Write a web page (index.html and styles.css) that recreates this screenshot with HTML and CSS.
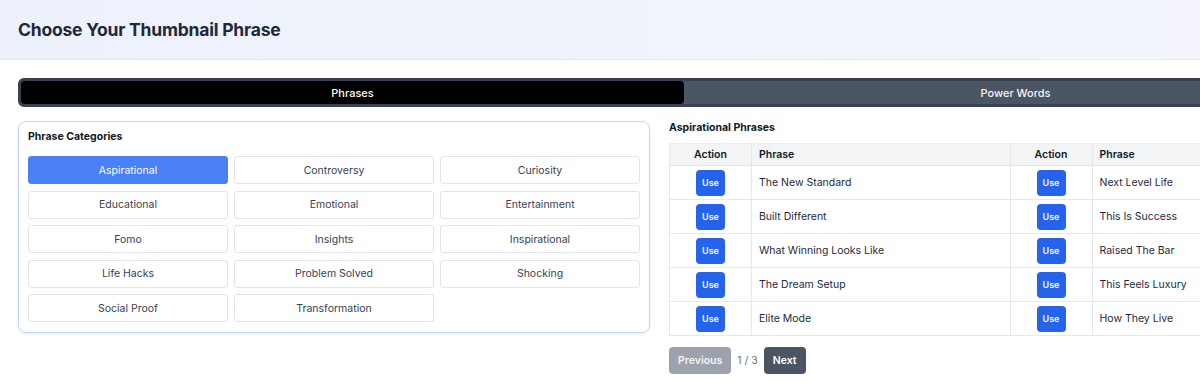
FILE: index.html
```html
<!DOCTYPE html>
<html lang="en">
<head>
  <meta charset="UTF-8" />
  <meta name="viewport" content="width=device-width, initial-scale=1.0" />
  <title>Choose Your Thumbnail Phrase</title>
  <link rel="stylesheet" href="styles.css">
</head>
<body>
  <div class="header">
    <h1>Choose Your Thumbnail Phrase</h1>
  </div>

  <div class="main">
    <div class="tabs">
      <button class="tab active">Phrases</button>
      <button class="tab">Power Words</button>
    </div>

    <div class="content">
      <div class="categories">
        <h2>Phrase Categories</h2>
        <div class="cat-grid">
          <button class="cat active">Aspirational</button>
          <button class="cat">Controversy</button>
          <button class="cat">Curiosity</button>
          <button class="cat">Educational</button>
          <button class="cat">Emotional</button>
          <button class="cat">Entertainment</button>
          <button class="cat">Fomo</button>
          <button class="cat">Insights</button>
          <button class="cat">Inspirational</button>
          <button class="cat">Life Hacks</button>
          <button class="cat">Problem Solved</button>
          <button class="cat">Shocking</button>
          <button class="cat">Social Proof</button>
          <button class="cat">Transformation</button>
        </div>
      </div>

      <div class="phrases">
        <h2>Aspirational Phrases</h2>
        <table>
          <thead>
            <tr>
              <th class="action">Action</th>
              <th>Phrase</th>
              <th class="action">Action</th>
              <th>Phrase</th>
            </tr>
          </thead>
          <tbody>
            <tr>
              <td class="action"><button class="use">Use</button></td>
              <td>The New Standard</td>
              <td class="action"><button class="use">Use</button></td>
              <td>Next Level Life</td>
            </tr>
            <tr>
              <td class="action"><button class="use">Use</button></td>
              <td>Built Different</td>
              <td class="action"><button class="use">Use</button></td>
              <td>This Is Success</td>
            </tr>
            <tr>
              <td class="action"><button class="use">Use</button></td>
              <td>What Winning Looks Like</td>
              <td class="action"><button class="use">Use</button></td>
              <td>Raised The Bar</td>
            </tr>
            <tr>
              <td class="action"><button class="use">Use</button></td>
              <td>The Dream Setup</td>
              <td class="action"><button class="use">Use</button></td>
              <td>This Feels Luxury</td>
            </tr>
            <tr>
              <td class="action"><button class="use">Use</button></td>
              <td>Elite Mode</td>
              <td class="action"><button class="use">Use</button></td>
              <td>How They Live</td>
            </tr>
          </tbody>
        </table>

        <div class="pager">
          <button class="page-btn disabled">Previous</button>
          <span class="page-info">1 / 3</span>
          <button class="page-btn">Next</button>
        </div>
      </div>
    </div>
  </div>
</body>
</html>
```

FILE: styles.css
```css
html, body {
  overflow: hidden;
}

body {
  font-family: Inter, "Noto Sans", Arial, sans-serif;
  background: #ffffff;
  color: #1f2937;
  margin: 0;
  width: 1368px;
}

button {
  font-family: inherit;
  cursor: pointer;
}

.header {
  height: 59px;
  display: flex;
  align-items: center;
  padding: 0 18px;
  background: linear-gradient(90deg, #edf1fb, #f4f6fc);
  border-bottom: 1px solid #e3e7ef;
}

.header h1 {
  margin: 0;
  font-size: 17.5px;
  font-weight: 700;
  color: #1f2937;
  letter-spacing: -0.2px;
}

.main {
  padding: 18px 18px 0 18px;
}

.tabs {
  display: flex;
  height: 23px;
  border: 3px solid #374151;
  border-radius: 6px;
  background: #4b5563;
}

.tab {
  flex: 1;
  border: 0;
  background: transparent;
  color: #f3f4f6;
  font-size: 11px;
  font-weight: 500;
  border-radius: 4px;
  padding: 0;
}

.tab.active {
  background: #000000;
  color: #ffffff;
}

.content {
  display: flex;
  gap: 19px;
  margin-top: 14px;
  align-items: flex-start;
}

.categories {
  width: 612px;
  border: 1px solid #c3d6f1;
  border-radius: 8px;
  padding: 8px 9px 10px 9px;
  box-shadow: 0 1px 3px rgba(59, 130, 246, 0.15);
}

h2 {
  margin: 0;
  font-size: 10.5px;
  font-weight: 700;
  color: #111827;
  line-height: 14px;
}

.cat-grid {
  margin-top: 12px;
  display: grid;
  grid-template-columns: repeat(3, 200px);
  column-gap: 6px;
  row-gap: 6.5px;
}

.cat {
  height: 28px;
  border: 1px solid #e1e4e8;
  border-radius: 3px;
  background: #ffffff;
  color: #374151;
  font-size: 10.5px;
  padding: 0;
}

.cat.active {
  background: #4a80f6;
  border-color: #4a80f6;
  color: #ffffff;
}

.phrases {
  width: 682px;
}

table {
  margin-top: 8px;
  border-collapse: collapse;
  width: 682px;
  table-layout: fixed;
  font-size: 10.5px;
}

th {
  height: 21px;
  background: #f3f4f6;
  text-align: left;
  padding: 0 7px;
  font-weight: 600;
  color: #111827;
  border: 1px solid #e5e7eb;
  border-top: 1px solid #eceef1;
}

td {
  height: 33px;
  padding: 0 7px;
  border: 1px solid #e5e7eb;
  color: #1f2937;
}

th.action, td.action {
  width: 67px;
  text-align: center;
}

.use {
  width: 29px;
  height: 26px;
  border: 0;
  border-radius: 4px;
  background: #2563eb;
  color: #ffffff;
  font-size: 9px;
  font-weight: 600;
  padding: 0;
  vertical-align: middle;
}

.pager {
  display: flex;
  align-items: center;
  gap: 6px;
  margin-top: 11px;
}

.page-btn {
  height: 27px;
  border: 0;
  border-radius: 4px;
  background: #4b5563;
  color: #ffffff;
  font-size: 10.5px;
  font-weight: 600;
  padding: 0 9px;
}

.page-btn.disabled {
  background: #9ca3af;
  color: #f3f4f6;
}

.page-info {
  font-size: 10.5px;
  color: #6b7280;
}
```
